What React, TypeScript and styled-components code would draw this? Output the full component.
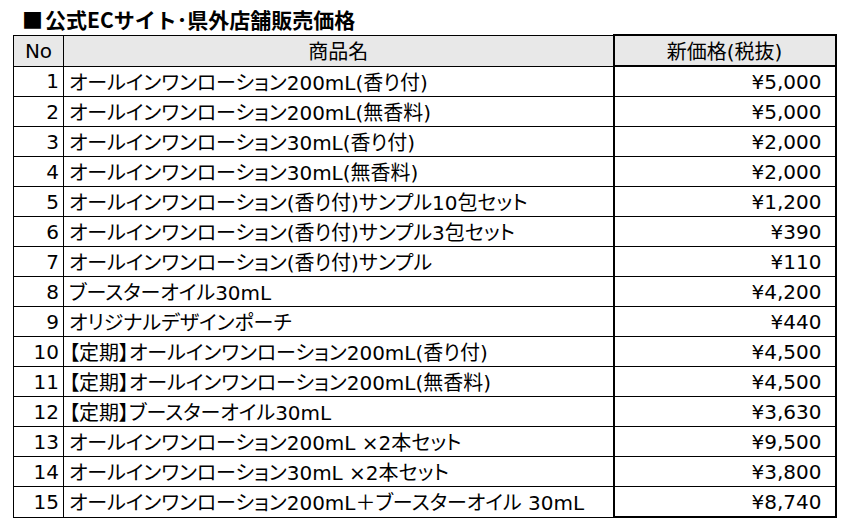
import styled, { createGlobalStyle } from 'styled-components'

const GlobalStyle = createGlobalStyle`
  body {
    margin: 0;
    background: #ffffff;
    color: #000000;
    font-family: "DejaVu Sans", "Noto Sans CJK JP", sans-serif;
  }
`

const Page = styled.div`
  width: 848px;
  height: 526px;
  overflow: hidden;
`

const Title = styled.h1`
  margin: 0;
  padding: 6px 0 0 22px;
  height: 28px;
  font-family: "Noto Sans CJK JP", sans-serif;
  font-size: 21px;
  font-weight: 700;
  line-height: 26px;
`

const Square = styled.span`
  margin-right: 2px;
`

const Table = styled.table`
  margin-left: 13px;
  width: 822px;
  border-collapse: collapse;
  table-layout: fixed;
  font-size: 20px;
  font-feature-settings: "palt";
`

const HeadCell = styled.th<{ $price?: boolean }>`
  height: 29px;
  padding: 0;
  background: #e8e8e8;
  font-weight: 400;
  text-align: center;
  border: 1px solid #000;
  ${({ $price }) => $price && 'border: 2px solid #000;'}
`

const Cell = styled.td<{ $align?: 'left' | 'right'; $price?: boolean; $last?: boolean }>`
  height: 29px;
  padding: 0 ${({ $price }) => ($price ? '13px' : '4px')} 0 ${({ $align }) => ($align === 'left' ? '5px' : '0')};
  text-align: ${({ $align }) => $align ?? 'right'};
  white-space: nowrap;
  border: 1px solid #000;
  ${({ $price }) => $price && 'border-left: 2px solid #000; border-right: 2px solid #000;'}
  ${({ $price, $last }) => $price && $last && 'border-bottom: 2px solid #000;'}
`

const rows: [string, string][] = [
  ['オールインワンローション200mL(香り付)', '¥5,000'],
  ['オールインワンローション200mL(無香料)', '¥5,000'],
  ['オールインワンローション30mL(香り付)', '¥2,000'],
  ['オールインワンローション30mL(無香料)', '¥2,000'],
  ['オールインワンローション(香り付)サンプル10包セット', '¥1,200'],
  ['オールインワンローション(香り付)サンプル3包セット', '¥390'],
  ['オールインワンローション(香り付)サンプル', '¥110'],
  ['ブースターオイル30mL', '¥4,200'],
  ['オリジナルデザインポーチ', '¥440'],
  ['【定期】オールインワンローション200mL(香り付)', '¥4,500'],
  ['【定期】オールインワンローション200mL(無香料)', '¥4,500'],
  ['【定期】ブースターオイル30mL', '¥3,630'],
  ['オールインワンローション200mL ×2本セット', '¥9,500'],
  ['オールインワンローション30mL ×2本セット', '¥3,800'],
  ['オールインワンローション200mL＋ブースターオイル 30mL', '¥8,740'],
]

export default function App() {
  return (
    <Page>
      <GlobalStyle />
      <Title>
        <Square>■</Square>公式ECサイト･県外店舗販売価格
      </Title>
      <Table>
        <colgroup>
          <col style={{ width: 50 }} />
          <col style={{ width: 550 }} />
          <col style={{ width: 222 }} />
        </colgroup>
        <thead>
          <tr>
            <HeadCell>No</HeadCell>
            <HeadCell>商品名</HeadCell>
            <HeadCell $price>新価格(税抜)</HeadCell>
          </tr>
        </thead>
        <tbody>
          {rows.map(([name, price], i) => (
            <tr key={i}>
              <Cell>{i + 1}</Cell>
              <Cell $align="left">{name}</Cell>
              <Cell $price $last={i === rows.length - 1}>
                {price}
              </Cell>
            </tr>
          ))}
        </tbody>
      </Table>
    </Page>
  )
}
